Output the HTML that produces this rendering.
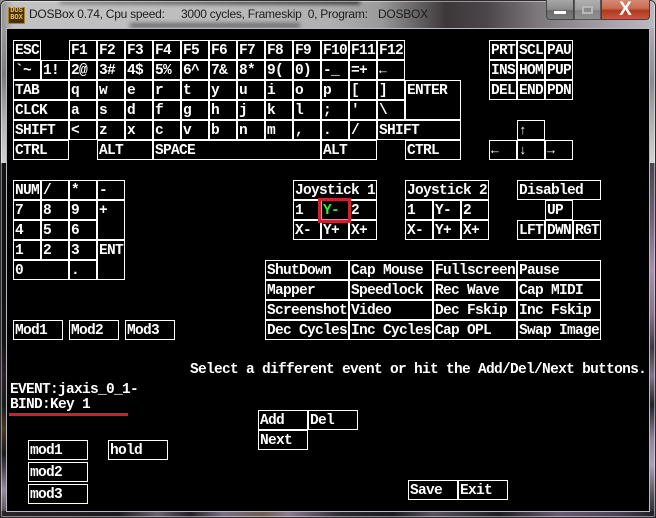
<!DOCTYPE html>
<html><head><meta charset="utf-8"><style>
html,body{margin:0;padding:0;background:#000}
#w{position:relative;width:656px;height:518px;overflow:hidden;background:#111}
#w div{position:absolute}
#s b{position:absolute;box-sizing:border-box;border:1px solid #fff;width:28px;height:20px;color:#fff;font:bold 14.5px/16px "Liberation Mono",monospace;letter-spacing:-.7px;padding:2px 0 0 1px;white-space:pre;overflow:hidden}
#s b i{font:bold 13px/14px "Liberation Mono",monospace;letter-spacing:0}
.t{color:#fff;font:bold 14.5px/16px "Liberation Mono",monospace;letter-spacing:-.7px;white-space:pre}
.c{color:#1c1c1c;font:12px/18px "Liberation Sans",sans-serif;letter-spacing:-.25px;white-space:pre;top:5px}
</style></head><body><div id="w">
<div style="left:0;top:0;width:656px;height:28px;background:linear-gradient(90deg,#8a8a8a 0,#c2c2c2 2%,#bdbdbd 30%,#b0b0b0 50%,#9a9a9a 58%,#3c383a 68%,#4a4548 74%,#7c787c 82%,#a39fa5 92%,#bdb9c2 100%)"></div>
<div style="left:60px;top:0;width:300px;height:4px;background:linear-gradient(90deg,#7a7a7a,#3a3a3a 60%,#222);filter:blur(2px)"></div>
<div style="left:130px;top:23px;width:170px;height:5px;background:#6a6a6a;filter:blur(2px)"></div>
<div style="left:0;top:28px;width:7px;height:135px;background:linear-gradient(#9a9a9a,#7f7c80 35%,#b5b5b5 70%,#d0d0d0)"></div>
<div style="left:0;top:163px;width:7px;height:355px;background:linear-gradient(#111 0,#141214 50%,#2a2028 60%,#1a1a1a 68%,#4a3824 75%,#1c1a1c 82%,#5a4e60 87%,#9a8aa4 92%,#6a6070 97%,#222)"></div>
<div style="left:650px;top:28px;width:6px;height:135px;background:linear-gradient(#b0aab5,#8c8a8e 40%,#bdbdc0 80%,#d4d2d6)"></div>
<div style="left:650px;top:163px;width:6px;height:355px;background:linear-gradient(#4a4450,#6d5f78 15%,#a58fae 30%,#8a7690 42%,#3e3844 52%,#80758c 60%,#25212a 68%,#8f87a0 78%,#aaa0b8 85%,#5c5664 93%,#222)"></div>
<div style="left:0;top:511px;width:656px;height:7px;background:linear-gradient(90deg,#2a2428 0,#1c1a1e 18%,#6a6272 24%,#221e24 29%,#7a7084 34%,#6f5c52 40%,#8a7c90 44%,#2a2830 52%,#1a1a20 60%,#5a5462 66%,#1c1c22 76%,#6a5a70 85%,#4c4454 94%,#1e1e22)"></div>
<div style="left:0;top:0;width:656px;height:518px;box-sizing:border-box;border:1px solid #2c2c2c;border-radius:6px 6px 2px 2px"></div>
<div style="left:1px;top:1px;width:654px;height:516px;box-sizing:border-box;border:1px solid rgba(255,255,255,.45);border-radius:5px 5px 2px 2px"></div>
<div style="left:6px;top:28px;width:644px;height:484px;box-sizing:border-box;border:1px solid #b8b8c0;background:#000"></div>
<div style="left:8px;top:7px;width:17px;height:17px;background:#4a3006;border:1px solid #a8862a;box-sizing:border-box"></div>
<div style="left:9px;top:8px;width:15px;height:15px;color:#f0c040;font:bold 7px/7px 'Liberation Mono',monospace;text-align:center">DOS<br>BOX</div>
<div class="c" style="left:29px">DOSBox 0.74, Cpu speed:</div>
<div class="c" style="left:181px">3000 cycles, Frameskip  0, Program:</div>
<div class="c" style="left:378px">DOSBOX</div>
<div style="left:546px;top:0;width:28px;height:20px;box-sizing:border-box;border:1px solid #444;border-top:0;border-radius:0 0 0 4px;background:linear-gradient(#a8a8a8,#8a8a8a 50%,#6b6b6b 55%,#7c7c7c)"></div>
<div style="left:554px;top:11px;width:12px;height:3px;background:#fff"></div>
<div style="left:574px;top:0;width:27px;height:20px;box-sizing:border-box;border:1px solid #555;border-top:0;background:linear-gradient(#b0b0b0,#9c9c9c 50%,#858585 55%,#909090)"></div>
<div style="left:582px;top:6px;width:11px;height:8px;box-sizing:border-box;border:2px solid #b8b8b8;background:#8a8a8a"></div>
<div style="left:601px;top:0;width:49px;height:20px;box-sizing:border-box;border:1px solid #444;border-top:0;border-radius:0 0 4px 0;background:linear-gradient(#d58a74,#c86a50 45%,#b03a20 55%,#c45a3c)"></div>
<div style="left:601px;top:0;width:49px;height:20px;color:#fff;font:bold 19px/20px 'Liberation Sans',sans-serif;text-align:center">X</div>
<div id="s">
<b style="left:13px;top:40px">ESC</b><b style="left:69px;top:40px">F1</b><b style="left:97px;top:40px">F2</b><b style="left:125px;top:40px">F3</b><b style="left:153px;top:40px">F4</b><b style="left:181px;top:40px">F5</b><b style="left:209px;top:40px">F6</b><b style="left:237px;top:40px">F7</b><b style="left:265px;top:40px">F8</b><b style="left:293px;top:40px">F9</b><b style="left:321px;top:40px">F10</b><b style="left:349px;top:40px">F11</b><b style="left:377px;top:40px">F12</b>
<b style="left:13px;top:60px">`~</b><b style="left:41px;top:60px">1!</b><b style="left:69px;top:60px">2@</b><b style="left:97px;top:60px">3#</b><b style="left:125px;top:60px">4$</b><b style="left:153px;top:60px">5%</b><b style="left:181px;top:60px">6^</b><b style="left:209px;top:60px">7&amp;</b><b style="left:237px;top:60px">8*</b><b style="left:265px;top:60px">9(</b><b style="left:293px;top:60px">0)</b><b style="left:321px;top:60px">-_</b><b style="left:349px;top:60px">=+</b><b style="left:377px;top:60px"><i>←</i></b>
<b style="left:13px;top:80px;width:56px">TAB</b><b style="left:69px;top:80px">q</b><b style="left:97px;top:80px">w</b><b style="left:125px;top:80px">e</b><b style="left:153px;top:80px">r</b><b style="left:181px;top:80px">t</b><b style="left:209px;top:80px">y</b><b style="left:237px;top:80px">u</b><b style="left:265px;top:80px">i</b><b style="left:293px;top:80px">o</b><b style="left:321px;top:80px">p</b><b style="left:349px;top:80px">[</b><b style="left:377px;top:80px">]</b><b style="left:405px;top:80px;width:56px;height:40px">ENTER</b>
<b style="left:13px;top:100px;width:56px">CLCK</b><b style="left:69px;top:100px">a</b><b style="left:97px;top:100px">s</b><b style="left:125px;top:100px">d</b><b style="left:153px;top:100px">f</b><b style="left:181px;top:100px">g</b><b style="left:209px;top:100px">h</b><b style="left:237px;top:100px">j</b><b style="left:265px;top:100px">k</b><b style="left:293px;top:100px">l</b><b style="left:321px;top:100px">;</b><b style="left:349px;top:100px">'</b><b style="left:377px;top:100px">\</b>
<b style="left:13px;top:120px;width:56px">SHIFT</b><b style="left:69px;top:120px">&lt;</b><b style="left:97px;top:120px">z</b><b style="left:125px;top:120px">x</b><b style="left:153px;top:120px">c</b><b style="left:181px;top:120px">v</b><b style="left:209px;top:120px">b</b><b style="left:237px;top:120px">n</b><b style="left:265px;top:120px">m</b><b style="left:293px;top:120px">,</b><b style="left:321px;top:120px">.</b><b style="left:349px;top:120px">/</b><b style="left:377px;top:120px;width:84px">SHIFT</b>
<b style="left:13px;top:140px;width:56px">CTRL</b><b style="left:97px;top:140px;width:56px">ALT</b><b style="left:153px;top:140px;width:168px">SPACE</b><b style="left:321px;top:140px;width:56px">ALT</b><b style="left:405px;top:140px;width:56px">CTRL</b>
<b style="left:489px;top:40px">PRT</b><b style="left:517px;top:40px">SCL</b><b style="left:545px;top:40px">PAU</b><b style="left:489px;top:60px">INS</b><b style="left:517px;top:60px">HOM</b><b style="left:545px;top:60px">PUP</b><b style="left:489px;top:80px">DEL</b><b style="left:517px;top:80px">END</b><b style="left:545px;top:80px">PDN</b>
<b style="left:517px;top:120px"><i>↑</i></b><b style="left:489px;top:140px"><i>←</i></b><b style="left:517px;top:140px"><i>↓</i></b><b style="left:545px;top:140px"><i>→</i></b>
<b style="left:13px;top:180px">NUM</b><b style="left:41px;top:180px">/</b><b style="left:69px;top:180px">*</b><b style="left:97px;top:180px">-</b>
<b style="left:13px;top:200px">7</b><b style="left:41px;top:200px">8</b><b style="left:69px;top:200px">9</b><b style="left:97px;top:200px;height:40px">+</b>
<b style="left:13px;top:220px">4</b><b style="left:41px;top:220px">5</b><b style="left:69px;top:220px">6</b>
<b style="left:13px;top:240px">1</b><b style="left:41px;top:240px">2</b><b style="left:69px;top:240px">3</b><b style="left:97px;top:240px;height:40px">ENT</b>
<b style="left:13px;top:260px;width:56px">0</b><b style="left:69px;top:260px">.</b>
<b style="left:13px;top:320px;width:50px">Mod1</b><b style="left:69px;top:320px;width:50px">Mod2</b><b style="left:125px;top:320px;width:50px">Mod3</b>
<b style="left:293px;top:180px;width:84px">Joystick 1</b><b style="left:293px;top:200px">1</b><b style="left:321px;top:200px;border-color:#5fe05f;color:#3fe83f">Y-</b><b style="left:349px;top:200px">2</b><b style="left:293px;top:220px">X-</b><b style="left:321px;top:220px">Y+</b><b style="left:349px;top:220px">X+</b>
<b style="left:405px;top:180px;width:84px">Joystick 2</b><b style="left:405px;top:200px">1</b><b style="left:433px;top:200px">Y-</b><b style="left:461px;top:200px">2</b><b style="left:405px;top:220px">X-</b><b style="left:433px;top:220px">Y+</b><b style="left:461px;top:220px">X+</b>
<b style="left:517px;top:180px;width:84px">Disabled</b><b style="left:545px;top:200px">UP</b><b style="left:517px;top:220px">LFT</b><b style="left:545px;top:220px">DWN</b><b style="left:573px;top:220px">RGT</b>
<b style="left:265px;top:260px;width:84px">ShutDown</b><b style="left:349px;top:260px;width:84px">Cap Mouse</b><b style="left:433px;top:260px;width:84px">Fullscreen</b><b style="left:517px;top:260px;width:84px">Pause</b>
<b style="left:265px;top:280px;width:84px">Mapper</b><b style="left:349px;top:280px;width:84px">Speedlock</b><b style="left:433px;top:280px;width:84px">Rec Wave</b><b style="left:517px;top:280px;width:84px">Cap MIDI</b>
<b style="left:265px;top:300px;width:84px">Screenshot</b><b style="left:349px;top:300px;width:84px">Video</b><b style="left:433px;top:300px;width:84px">Dec Fskip</b><b style="left:517px;top:300px;width:84px">Inc Fskip</b>
<b style="left:265px;top:320px;width:84px">Dec Cycles</b><b style="left:349px;top:320px;width:84px">Inc Cycles</b><b style="left:433px;top:320px;width:84px">Cap OPL</b><b style="left:517px;top:320px;width:84px">Swap Image</b>
<b style="left:258px;top:410px;width:50px">Add</b><b style="left:308px;top:410px;width:50px">Del</b><b style="left:258px;top:430px;width:50px">Next</b>
<b style="left:408px;top:480px;width:50px">Save</b><b style="left:458px;top:480px;width:50px">Exit</b>
<b style="left:28px;top:440px;width:60px">mod1</b><b style="left:108px;top:440px;width:60px">hold</b><b style="left:28px;top:462px;width:60px">mod2</b><b style="left:28px;top:484px;width:60px">mod3</b>
</div>
<div style="left:318px;top:198px;width:33px;height:25px;box-sizing:border-box;border:3px solid #c8242c"></div>
<div class="t" style="left:190px;top:362px">Select a different event or hit the Add/Del/Next buttons.</div>
<div class="t" style="left:10px;top:382px">EVENT:jaxis_0_1-</div>
<div class="t" style="left:10px;top:397px">BIND:Key 1</div>
<div style="left:9px;top:413px;width:119px;height:3px;background:#c8242c"></div>
</div></body></html>
